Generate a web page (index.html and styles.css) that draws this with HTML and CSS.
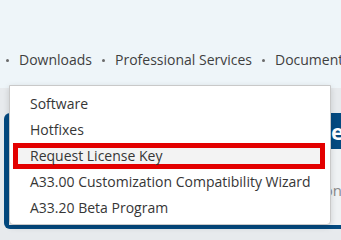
FILE: index.html
```html
<!DOCTYPE html>
<html lang="en">
<head>
<meta charset="utf-8">
<title>Downloads menu</title>
<link rel="stylesheet" href="styles.css">
</head>
<body>
<header class="topbar">
  <nav class="nav">
    <a class="nav-item" href="#">Downloads</a>
    <a class="nav-item" href="#">Professional Services</a>
    <a class="nav-item" href="#">Documentation</a>
  </nav>
</header>
<main class="content">
  <section class="card">
    <h2 class="card-title"><span class="card-title-text">Welcome</span></h2>
    <div class="card-body">
      <p class="card-text"><span class="card-text-inner">Instructions</span></p>
    </div>
  </section>
</main>
<ul class="dropdown">
  <li class="dropdown-item">Software</li>
  <li class="dropdown-item">Hotfixes</li>
  <li class="dropdown-item is-marked">Request License Key</li>
  <li class="dropdown-item">A33.00 Customization Compatibility Wizard</li>
  <li class="dropdown-item">A33.20 Beta Program</li>
</ul>
</body>
</html>
```
FILE: styles.css
```css
* { box-sizing: border-box; }
html, body {
  margin: 0;
  padding: 0;
  width: 341px;
  height: 240px;
  overflow: hidden;
}
body {
  font-family: "Open Sans", "Noto Sans", sans-serif;
  background: #e7eaed;
  position: relative;
}
.topbar {
  height: 88px;
  background: #eef5f9;
  padding-top: 50px;
}
.nav {
  display: flex;
  align-items: center;
  white-space: nowrap;
  padding-left: 6px;
  gap: 10px;
}
.nav-item {
  display: flex;
  align-items: center;
  font-size: 14px;
  line-height: 20px;
  color: #3f3f3f;
  text-decoration: none;
}
.nav-item::before {
  content: "";
  width: 3px;
  height: 3px;
  border-radius: 50%;
  background: #6a6a6a;
  margin-right: 10px;
}
.content {
  padding: 25px 0 0 4px;
}
.card {
  width: 420px;
  background: #044a80;
  border-radius: 6px;
  padding: 0 5px 4px 5px;
}
.card-title {
  margin: 0;
  height: 36px;
  font-size: 22px;
  font-weight: 700;
  line-height: 36px;
  color: #ffffff;
  white-space: nowrap;
}
.card-title-text {
  display: inline-block;
  width: 335px;
  text-align: right;
}
.card-body {
  background: #eff2f4;
  height: 76px;
  padding-top: 31px;
}
.card-text {
  margin: 0;
  font-size: 15px;
  line-height: 20px;
  color: #8a8a8a;
  white-space: nowrap;
}
.card-text-inner {
  display: inline-block;
  width: 340px;
  text-align: right;
}
.dropdown {
  position: absolute;
  left: 9px;
  top: 85px;
  width: 322px;
  height: 140px;
  margin: 0;
  padding: 5px 0 4px 0;
  list-style: none;
  background: #ffffff;
  border: 1px solid #c9c9c9;
  border-radius: 0 0 4px 4px;
  box-shadow: 0 2px 6px rgba(0, 0, 0, 0.15);
}
.dropdown-item {
  font-size: 14px;
  line-height: 26px;
  height: 26px;
  padding-left: 20px;
  color: #363636;
  white-space: nowrap;
}
.dropdown-item.is-marked {
  margin: 0 5px 0 3px;
  padding-left: 17px;
  background: #f3f3f3;
  box-shadow: inset 0 0 0 5px #e30000;
}
```
